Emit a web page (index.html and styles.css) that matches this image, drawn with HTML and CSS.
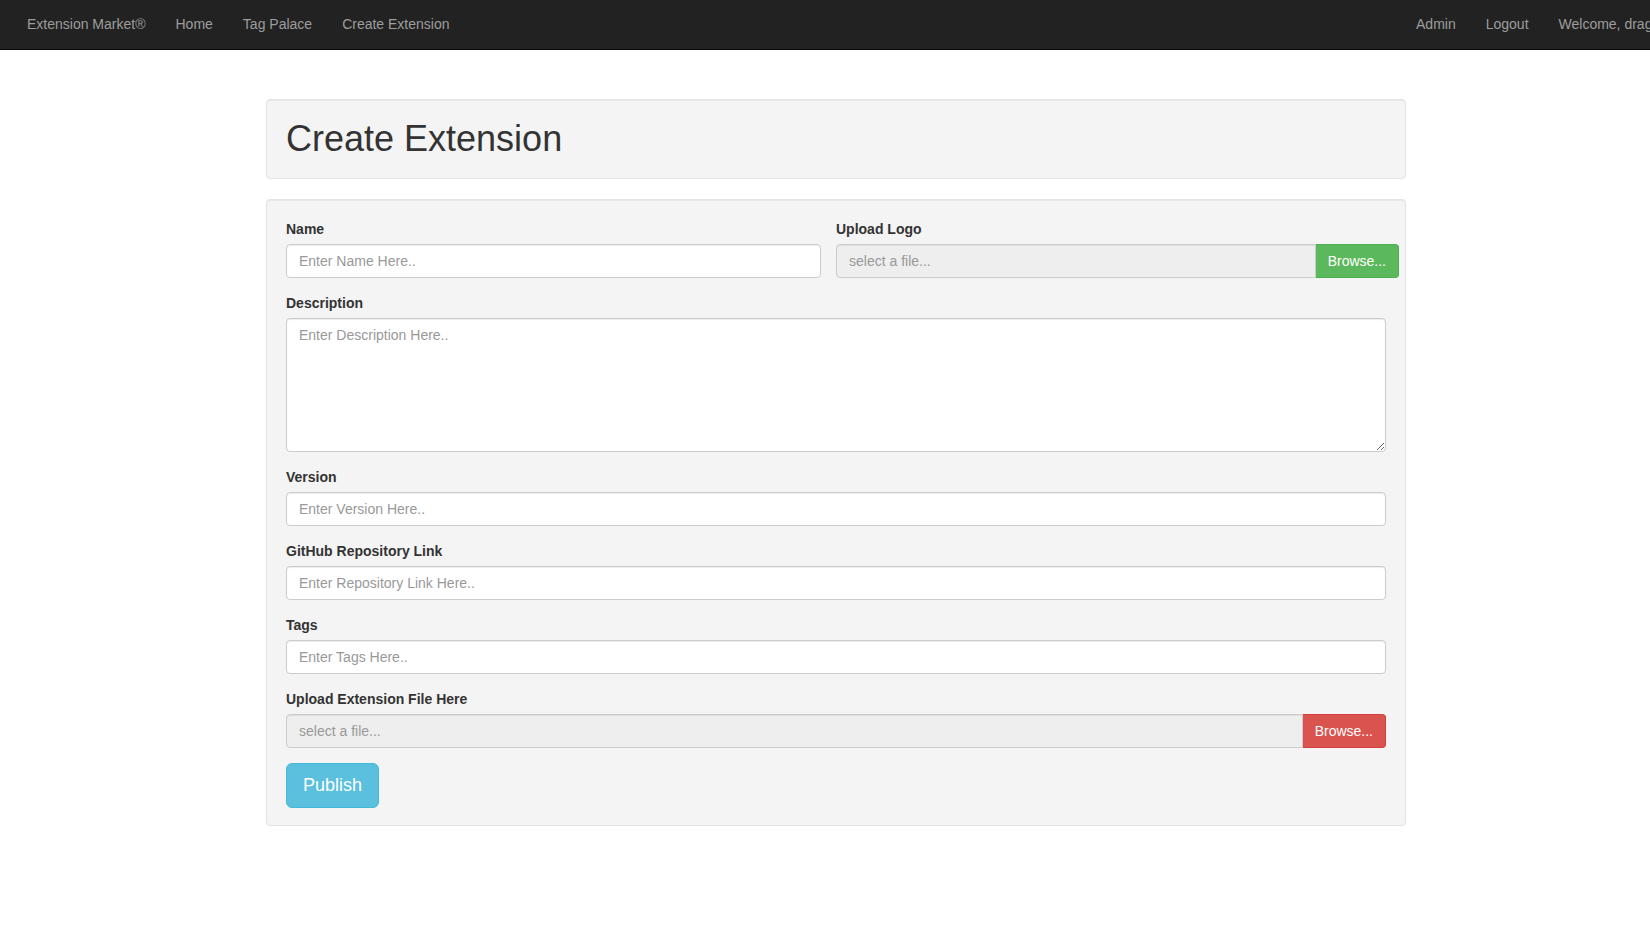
FILE: index.html
```html
<!DOCTYPE html>
<html lang="en">
<head>
<meta charset="utf-8">
<title>Create Extension</title>
<link rel="stylesheet" href="styles.css">
</head>
<body>
<div class="page">
  <nav class="navbar">
    <div class="nav-left">
      <a class="brand" href="#">Extension Market®</a>
      <a class="nav-link" href="#">Home</a>
      <a class="nav-link" href="#">Tag Palace</a>
      <a class="nav-link" href="#">Create Extension</a>
    </div>
    <div class="nav-right">
      <a class="nav-link" href="#">Admin</a>
      <a class="nav-link" href="#">Logout</a>
      <span class="nav-link">Welcome, dragon</span>
    </div>
  </nav>

  <main class="container">
    <div class="well">
      <h1 class="title">Create Extension</h1>
    </div>

    <form class="well form">
      <div class="row">
        <div class="form-group col-name">
          <label class="label">Name</label>
          <input class="form-control" type="text" placeholder="Enter Name Here..">
        </div>
        <div class="form-group col-logo">
          <label class="label">Upload Logo</label>
          <div class="input-group">
            <input class="form-control readonly" type="text" placeholder="select a file..." readonly>
            <span class="btn btn-success">Browse...</span>
          </div>
        </div>
      </div>

      <div class="form-group">
        <label class="label">Description</label>
        <textarea class="form-control textarea" rows="6" placeholder="Enter Description Here.."></textarea>
      </div>

      <div class="form-group">
        <label class="label">Version</label>
        <input class="form-control" type="text" placeholder="Enter Version Here..">
      </div>

      <div class="form-group">
        <label class="label">GitHub Repository Link</label>
        <input class="form-control" type="text" placeholder="Enter Repository Link Here..">
      </div>

      <div class="form-group">
        <label class="label">Tags</label>
        <input class="form-control" type="text" placeholder="Enter Tags Here..">
      </div>

      <div class="form-group">
        <label class="label">Upload Extension File Here</label>
        <div class="input-group">
          <input class="form-control readonly" type="text" placeholder="select a file..." readonly>
          <span class="btn btn-danger">Browse...</span>
        </div>
      </div>

      <button class="btn-lg btn-info" type="button">Publish</button>
    </form>
  </main>
</div>
</body>
</html>
```

FILE: styles.css
```css
html {
  overflow: hidden;
}

body {
  margin: 0;
  font-family: "Liberation Sans", Arial, Helvetica, sans-serif;
  font-size: 14px;
  line-height: 20px;
  color: #333;
  background: #fff;
}

.page {
  width: 1672px;
}

.navbar {
  display: flex;
  justify-content: space-between;
  height: 49px;
  background: #222;
  border-bottom: 1px solid #080808;
  padding: 0 0 0 12px;
}

.nav-left,
.nav-right {
  display: flex;
  align-items: stretch;
}

.nav-link,
.brand {
  display: block;
  padding: 14px 15px 15px;
  color: #9d9d9d;
  text-decoration: none;
  font-size: 14px;
  line-height: 20px;
  white-space: nowrap;
}

.nav-right {
  margin-right: -11px;
}

.container {
  width: 1140px;
  margin: 49px auto 0;
}

.well {
  background: #f4f4f4;
  border: 1px solid #e3e3e3;
  border-radius: 4px;
  box-shadow: inset 0 1px 1px rgba(0, 0, 0, 0.05);
  padding: 19px;
  margin-bottom: 20px;
}

.title {
  margin: 0;
  font-size: 36px;
  font-weight: 500;
  line-height: 40px;
  color: #333;
}

.form {
  padding-bottom: 17px;
}

.row {
  display: flex;
}

.col-name {
  flex: 0 0 535px;
  margin-right: 15px;
}

.col-logo {
  flex: 0 0 563px;
}

.form-group {
  margin-bottom: 15px;
}

.label {
  display: inline-block;
  max-width: 100%;
  margin-bottom: 5px;
  font-weight: bold;
  color: #333;
}

.form-control {
  display: block;
  box-sizing: border-box;
  width: 100%;
  height: 34px;
  padding: 6px 12px;
  font-family: inherit;
  font-size: 14px;
  line-height: 20px;
  color: #555;
  background: #fff;
  border: 1px solid #ccc;
  border-radius: 4px;
  box-shadow: inset 0 1px 1px rgba(0, 0, 0, 0.075);
  margin: 0;
}

.form-control::placeholder {
  color: #999;
}

.textarea {
  height: 134px;
  resize: vertical;
}

.readonly {
  background: #eee;
}

.input-group {
  display: flex;
}

.input-group .form-control {
  flex: 1 1 auto;
  border-top-right-radius: 0;
  border-bottom-right-radius: 0;
}

.btn {
  flex: 0 0 auto;
  box-sizing: border-box;
  height: 34px;
  padding: 6px 12px;
  font-size: 14px;
  line-height: 20px;
  color: #fff;
  border: 1px solid transparent;
  border-left: 0;
  border-radius: 0 4px 4px 0;
  white-space: nowrap;
  cursor: pointer;
}

.btn-success {
  background: #5cb85c;
  border-color: #4cae4c;
}

.btn-danger {
  background: #d9534f;
  border-color: #d43f3a;
}

.btn-lg {
  display: inline-block;
  box-sizing: border-box;
  height: 45px;
  padding: 10px 16px;
  font-family: inherit;
  font-size: 18px;
  line-height: 23px;
  color: #fff;
  border: 1px solid transparent;
  border-radius: 6px;
  cursor: pointer;
}

.btn-info {
  background: #5bc0de;
  border-color: #46b8da;
}
```
